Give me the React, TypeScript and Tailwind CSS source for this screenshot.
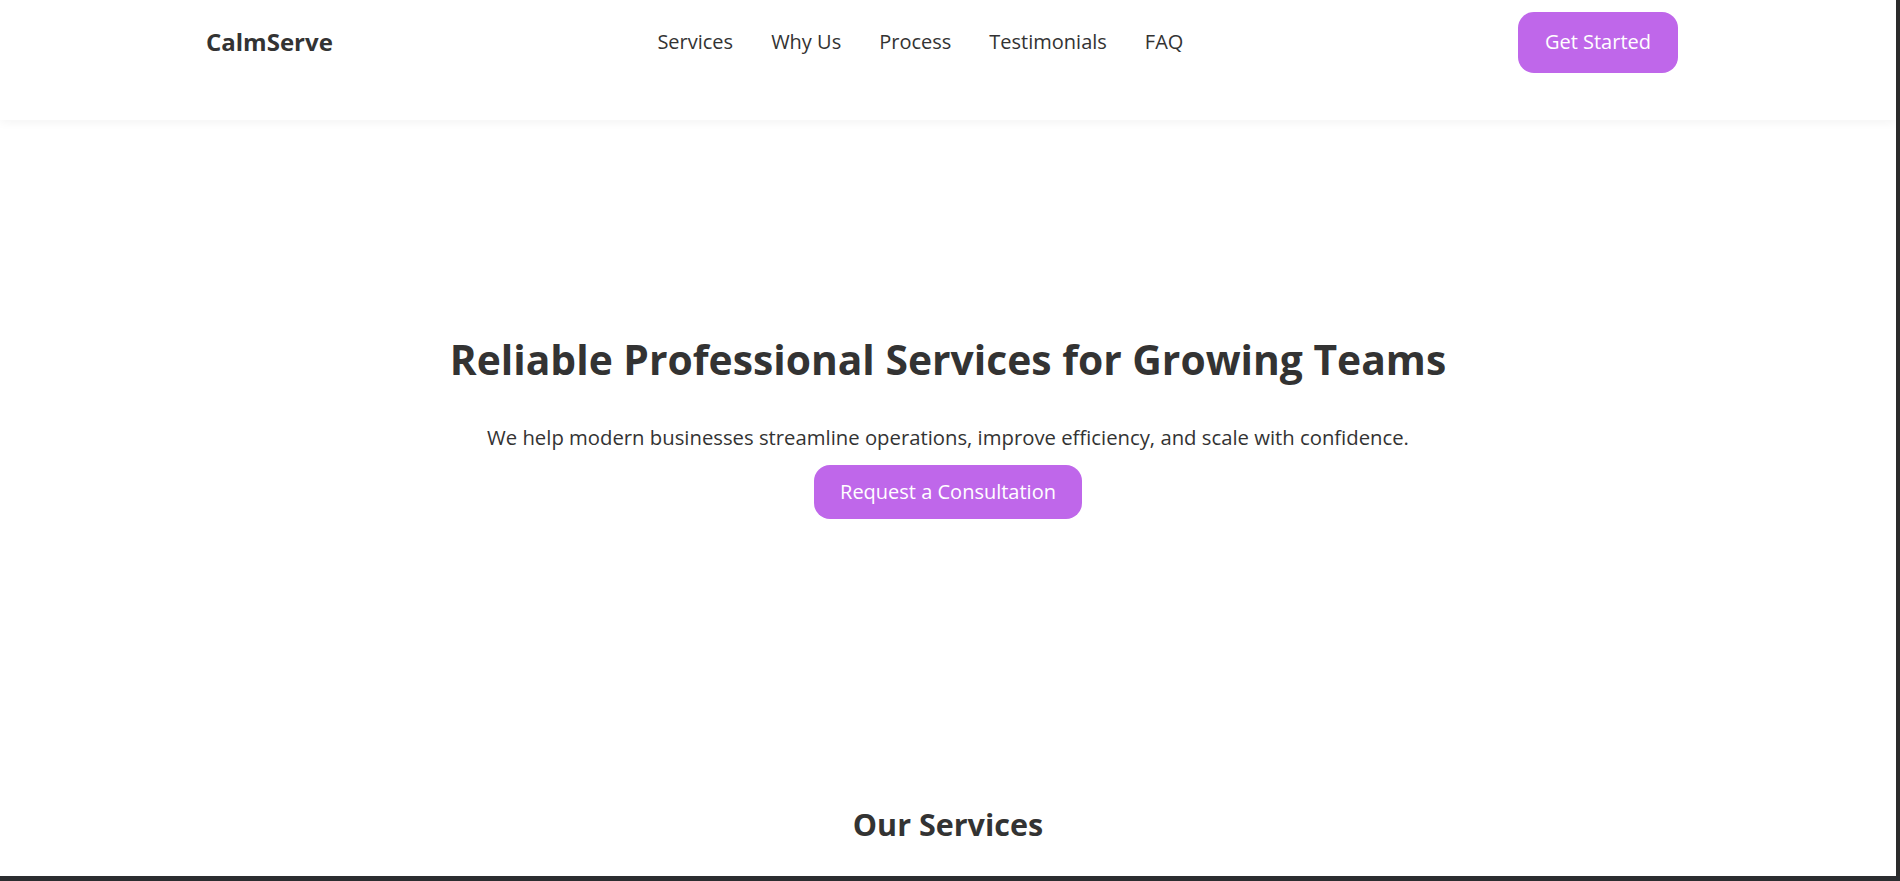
export default function App() {
  const links = ['Services', 'Why Us', 'Process', 'Testimonials', 'FAQ'];

  return (
    <div className="h-screen flex flex-col overflow-hidden bg-[#2b2d30] font-['Open_Sans',sans-serif] text-[#333333]">
      <div className="flex flex-1 min-h-0">
        <div className="flex-1 bg-white overflow-hidden">
          {/* Header */}
          <header className="h-[120px] bg-white shadow-[0_2px_10px_rgba(0,0,0,0.05)] relative z-10">
            <div className="h-[84px] pl-[206px] pr-[218px] flex items-center justify-between">
              <div className="text-[24px] font-bold">CalmServe</div>
              <nav className="mr-[10px] flex items-center gap-[38px] text-[20px]">
                {links.map((l) => (
                  <a key={l} href="#" className="text-[#333333]">
                    {l}
                  </a>
                ))}
              </nav>
              <button className="h-[61px] px-[27px] rounded-[16px] bg-[#bf67ea] text-white text-[20px]">
                Get Started
              </button>
            </div>
          </header>

          {/* Hero */}
          <section className="h-[620px] pt-[214px] flex flex-col items-center text-center">
            <h1 className="text-[40.8px] font-bold leading-[1.25]">
              Reliable Professional Services for Growing Teams
            </h1>
            <p className="mt-[37px] text-[20.3px] leading-[1.5]">
              We help modern businesses streamline operations, improve efficiency, and scale with confidence.
            </p>
            <button className="mt-[13px] h-[54px] px-[26px] rounded-[16px] bg-[#bf67ea] text-white text-[20px]">
              Request a Consultation
            </button>
          </section>

          {/* Services */}
          <section className="pt-[62px] text-center">
            <h2 className="text-[30.5px] font-bold leading-[1.5]">Our Services</h2>
          </section>
        </div>
        <div className="w-[4px] bg-[#2b2b2b]" />
      </div>
      <div className="h-[5px] bg-[#2b2d30]" />
    </div>
  );
}
